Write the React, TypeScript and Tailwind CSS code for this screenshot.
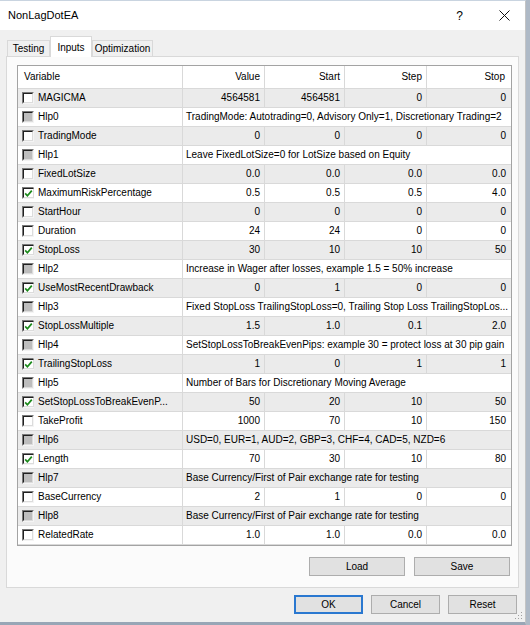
import React from "react";

type Param = {
  name: string;
  kind: "off" | "on" | "help";
  vals?: string[];
  help?: string;
};

const params: Param[] = [
  { name: "MAGICMA", kind: "off", vals: ["4564581", "4564581", "0", "0"] },
  { name: "Hlp0", kind: "help", help: "TradingMode: Autotrading=0, Advisory Only=1, Discretionary Trading=2" },
  { name: "TradingMode", kind: "off", vals: ["0", "0", "0", "0"] },
  { name: "Hlp1", kind: "help", help: "Leave FixedLotSize=0 for LotSize based on Equity" },
  { name: "FixedLotSize", kind: "off", vals: ["0.0", "0.0", "0.0", "0.0"] },
  { name: "MaximumRiskPercentage", kind: "on", vals: ["0.5", "0.5", "0.5", "4.0"] },
  { name: "StartHour", kind: "off", vals: ["0", "0", "0", "0"] },
  { name: "Duration", kind: "off", vals: ["24", "24", "0", "0"] },
  { name: "StopLoss", kind: "on", vals: ["30", "10", "10", "50"] },
  { name: "Hlp2", kind: "help", help: "Increase in Wager after losses, example 1.5 = 50% increase" },
  { name: "UseMostRecentDrawback", kind: "on", vals: ["0", "1", "0", "0"] },
  { name: "Hlp3", kind: "help", help: "Fixed StopLoss TrailingStopLoss=0, Trailing Stop Loss TrailingStopLos..." },
  { name: "StopLossMultiple", kind: "on", vals: ["1.5", "1.0", "0.1", "2.0"] },
  { name: "Hlp4", kind: "help", help: "SetStopLossToBreakEvenPips: example 30 = protect loss at 30 pip gain" },
  { name: "TrailingStopLoss", kind: "on", vals: ["1", "0", "1", "1"] },
  { name: "Hlp5", kind: "help", help: "Number of Bars for Discretionary Moving Average" },
  { name: "SetStopLossToBreakEvenP...", kind: "on", vals: ["50", "20", "10", "50"] },
  { name: "TakeProfit", kind: "off", vals: ["1000", "70", "10", "150"] },
  { name: "Hlp6", kind: "help", help: "USD=0, EUR=1, AUD=2, GBP=3, CHF=4, CAD=5, NZD=6" },
  { name: "Length", kind: "on", vals: ["70", "30", "10", "80"] },
  { name: "Hlp7", kind: "help", help: "Base Currency/First of Pair exchange rate for testing" },
  { name: "BaseCurrency", kind: "off", vals: ["2", "1", "0", "0"] },
  { name: "Hlp8", kind: "help", help: "Base Currency/First of Pair exchange rate for testing" },
  { name: "RelatedRate", kind: "off", vals: ["1.0", "1.0", "0.0", "0.0"] },
];

function CheckBox({ kind }: { kind: Param["kind"] }) {
  const fill = kind === "help" ? "bg-[#bdbdbd]" : "bg-white";
  return (
    <span className="w-[12px] h-[12px] shrink-0 flex border-t border-l border-[#7a7a7a] border-r border-b border-r-[#f4f4f4] border-b-[#f4f4f4]">
      <span className={`flex-1 flex items-center justify-center border-t border-l border-[#202020] border-r border-b border-r-[#dcdcdc] border-b-[#dcdcdc] ${fill}`}>
        {kind === "on" && (
          <svg width="9" height="9" viewBox="0 0 9 9">
            <path d="M1.2 4.4 L3.4 6.8 L7.8 1.6" fill="none" stroke="#1b8a1b" strokeWidth="1.7" />
          </svg>
        )}
      </span>
    </span>
  );
}

function Row({ p, i }: { p: Param; i: number }) {
  const bg = i % 2 === 0 ? "bg-[#ebebeb]" : "bg-white";
  return (
    <div className={`grid grid-cols-[165px_82px_80px_82px_1fr] h-[19px] border-b border-[#d9d9d9] leading-[18px] ${bg}`}>
      <div className="flex items-center gap-[4px] pl-[4px] border-r border-[#d9d9d9] whitespace-nowrap overflow-hidden">
        <CheckBox kind={p.kind} />
        <span>{p.name}</span>
      </div>
      {p.kind === "help" ? (
        <div className="col-span-4 pl-[3px] whitespace-nowrap overflow-hidden">{p.help}</div>
      ) : (
        p.vals!.map((v, k) => (
          <div
            key={k}
            className={k < 3 ? "text-right pr-[4px] border-r border-[#d9d9d9]" : "text-right pr-[5px]"}
          >
            {v}
          </div>
        ))
      )}
    </div>
  );
}

function Button({ label, wide, focused }: { label: string; wide?: boolean; focused?: boolean }) {
  const size = wide ? "w-[96px]" : "w-[69px]";
  const border = focused ? "border-2 border-[#2a78d0]" : "border border-[#adadad]";
  return (
    <div className={`${size} h-[19px] flex items-center justify-center bg-[#e1e1e1] ${border} text-[10px]`}>
      {label}
    </div>
  );
}

export default function App() {
  return (
    <div
      className="w-[530px] h-[625px] flex bg-[#aeb9c6] text-black overflow-hidden"
      style={{ fontFamily: '"Liberation Sans", Arial, sans-serif' }}
    >
      <div className="w-[526px] h-[625px] flex flex-col bg-[#f0f0f0] border-t border-[#c9d4e0] border-r border-r-[#c4c4c4] border-b-[3px] border-b-[#98a6b6] relative">
        {/* title bar */}
        <div className="h-[29px] bg-white flex items-center pl-[8px] text-[11px]">
          <span className="flex-1">NonLagDotEA</span>
          <span className="text-[12px] mr-[36px]">?</span>
          <svg width="11" height="11" viewBox="0 0 11 11" className="mr-[15px]">
            <path d="M0.5 0.5 L10.5 10.5 M10.5 0.5 L0.5 10.5" stroke="#111" strokeWidth="1" />
          </svg>
        </div>

        <div className="flex flex-col px-[6px] pt-[6px]">
          {/* tabs */}
          <div className="h-[20px] flex items-end pl-[1px] text-[10px]">
            <div className="w-[43px] h-[16px] flex items-center justify-center bg-[#f0f0f0] border border-b-0 border-[#d9d9d9]">
              Testing
            </div>
            <div className="w-[42px] h-[21px] -mb-px relative z-10 flex items-start pt-[3px] justify-center bg-white border border-b-0 border-[#d9d9d9]">
              Inputs
            </div>
            <div className="w-[61px] h-[16px] flex items-center justify-center bg-[#f0f0f0] border border-b-0 border-[#d9d9d9]">
              Optimization
            </div>
          </div>

          {/* tab page */}
          <div className="w-[513px] h-[532px] flex flex-col bg-[#fbfbfb] border border-[#d9d9d9] pl-[10px] pr-[6px] pt-[8px] text-[10px]">
            <div className="flex flex-col border border-[#a3a3a3] bg-white">
              <div className="grid grid-cols-[165px_82px_80px_82px_1fr] h-[23px] border-b border-[#d9d9d9] leading-[22px] bg-white">
                <div className="pl-[6px] border-r border-[#d9d9d9]">Variable</div>
                <div className="text-right pr-[4px] border-r border-[#d9d9d9]">Value</div>
                <div className="text-right pr-[4px] border-r border-[#d9d9d9]">Start</div>
                <div className="text-right pr-[4px] border-r border-[#d9d9d9]">Step</div>
                <div className="text-right pr-[6px]">Stop</div>
              </div>
              {params.map((p, i) => (
                <Row key={i} p={p} i={i} />
              ))}
            </div>

            <div className="flex justify-end gap-[9px] mt-[11px] mr-[2px]">
              <Button label="Load" wide />
              <Button label="Save" wide />
            </div>
          </div>

          {/* dialog buttons */}
          <div className="flex justify-end gap-[8px] mt-[7px] mr-[2px]">
            <Button label="OK" focused />
            <Button label="Cancel" />
            <Button label="Reset" />
          </div>
        </div>

        {/* size grip */}
        <svg width="8" height="8" viewBox="0 0 8 8" className="absolute right-[2px] bottom-[2px]">
          <rect x="6" y="0" width="1" height="1" fill="#a0a0a0" />
          <rect x="3" y="3" width="1" height="1" fill="#a0a0a0" />
          <rect x="6" y="3" width="1" height="1" fill="#a0a0a0" />
          <rect x="0" y="6" width="1" height="1" fill="#a0a0a0" />
          <rect x="3" y="6" width="1" height="1" fill="#a0a0a0" />
          <rect x="6" y="6" width="1" height="1" fill="#a0a0a0" />
        </svg>
      </div>
    </div>
  );
}
